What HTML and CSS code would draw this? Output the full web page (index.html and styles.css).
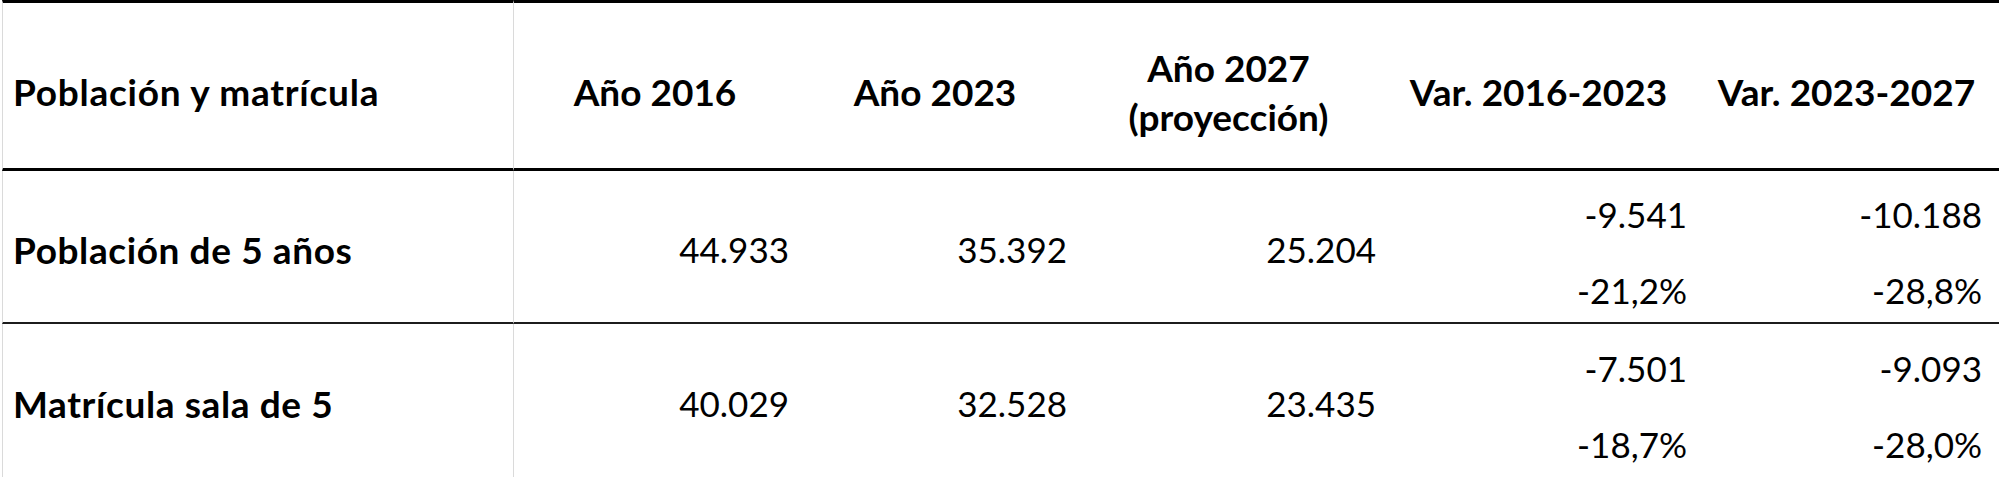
FILE: index.html
```html
<!DOCTYPE html>
<html lang="es">
<head>
<meta charset="utf-8">
<title>Población y matrícula</title>
<link rel="stylesheet" href="styles.css">
</head>
<body>
<div class="tbl">
  <div class="cell head lbl">Población y matrícula</div>
  <div class="cell head">Año 2016</div>
  <div class="cell head">Año 2023</div>
  <div class="cell head">Año 2027<br>(proyección)</div>
  <div class="cell head">Var. 2016-2023</div>
  <div class="cell head">Var. 2023-2027</div>

  <div class="cell row first lbl">Población de 5 años</div>
  <div class="cell row first num">44.933</div>
  <div class="cell row first num">35.392</div>
  <div class="cell row first num">25.204</div>
  <div class="cell row first var"><span class="sub">-9.541</span><span class="sub">-21,2%</span></div>
  <div class="cell row first var last"><span class="sub">-10.188</span><span class="sub">-28,8%</span></div>

  <div class="cell row lbl">Matrícula sala de 5</div>
  <div class="cell row num">40.029</div>
  <div class="cell row num">32.528</div>
  <div class="cell row num">23.435</div>
  <div class="cell row var"><span class="sub">-7.501</span><span class="sub">-18,7%</span></div>
  <div class="cell row var last"><span class="sub">-9.093</span><span class="sub">-28,0%</span></div>
</div>
</body>
</html>
```

FILE: styles.css
```css
body {
  margin: 0;
  background: #ffffff;
  color: #000000;
  font-family: Lato, "Liberation Sans", sans-serif;
}

.tbl {
  display: grid;
  grid-template-columns: 512px 282px 278px 309px 311px 1fr;
  width: 1997px;
  margin-left: 2px;
}

.cell {
  box-sizing: border-box;
  display: flex;
  align-items: center;
  font-size: 35px;
  line-height: 49px;
}

.head {
  height: 171px;
  border-top: 3px solid #000000;
  border-bottom: 3px solid #000000;
  padding-top: 12px;
  font-size: 37px;
  font-weight: 700;
  justify-content: center;
  text-align: center;
}

.row {
  height: 153px;
  padding-top: 5px;
}

.row.first {
  border-bottom: 2px solid #1c1c1c;
}

.lbl {
  justify-content: flex-start;
  text-align: left;
  padding-left: 10px;
  border-left: 1px solid #dadada;
  border-right: 1px solid #dadada;
  font-size: 37px;
  font-weight: 700;
  letter-spacing: 0.6px;
}

.head.lbl {
  letter-spacing: 0.75px;
}

.num {
  justify-content: flex-end;
  padding-right: 7px;
}

.var {
  flex-direction: column;
  align-items: stretch;
  padding-top: 0;
}

.sub {
  flex: 1;
  display: flex;
  align-items: center;
  justify-content: flex-end;
  padding-top: 12px;
  padding-right: 7px;
}

.last .sub {
  padding-right: 17px;
}
```
